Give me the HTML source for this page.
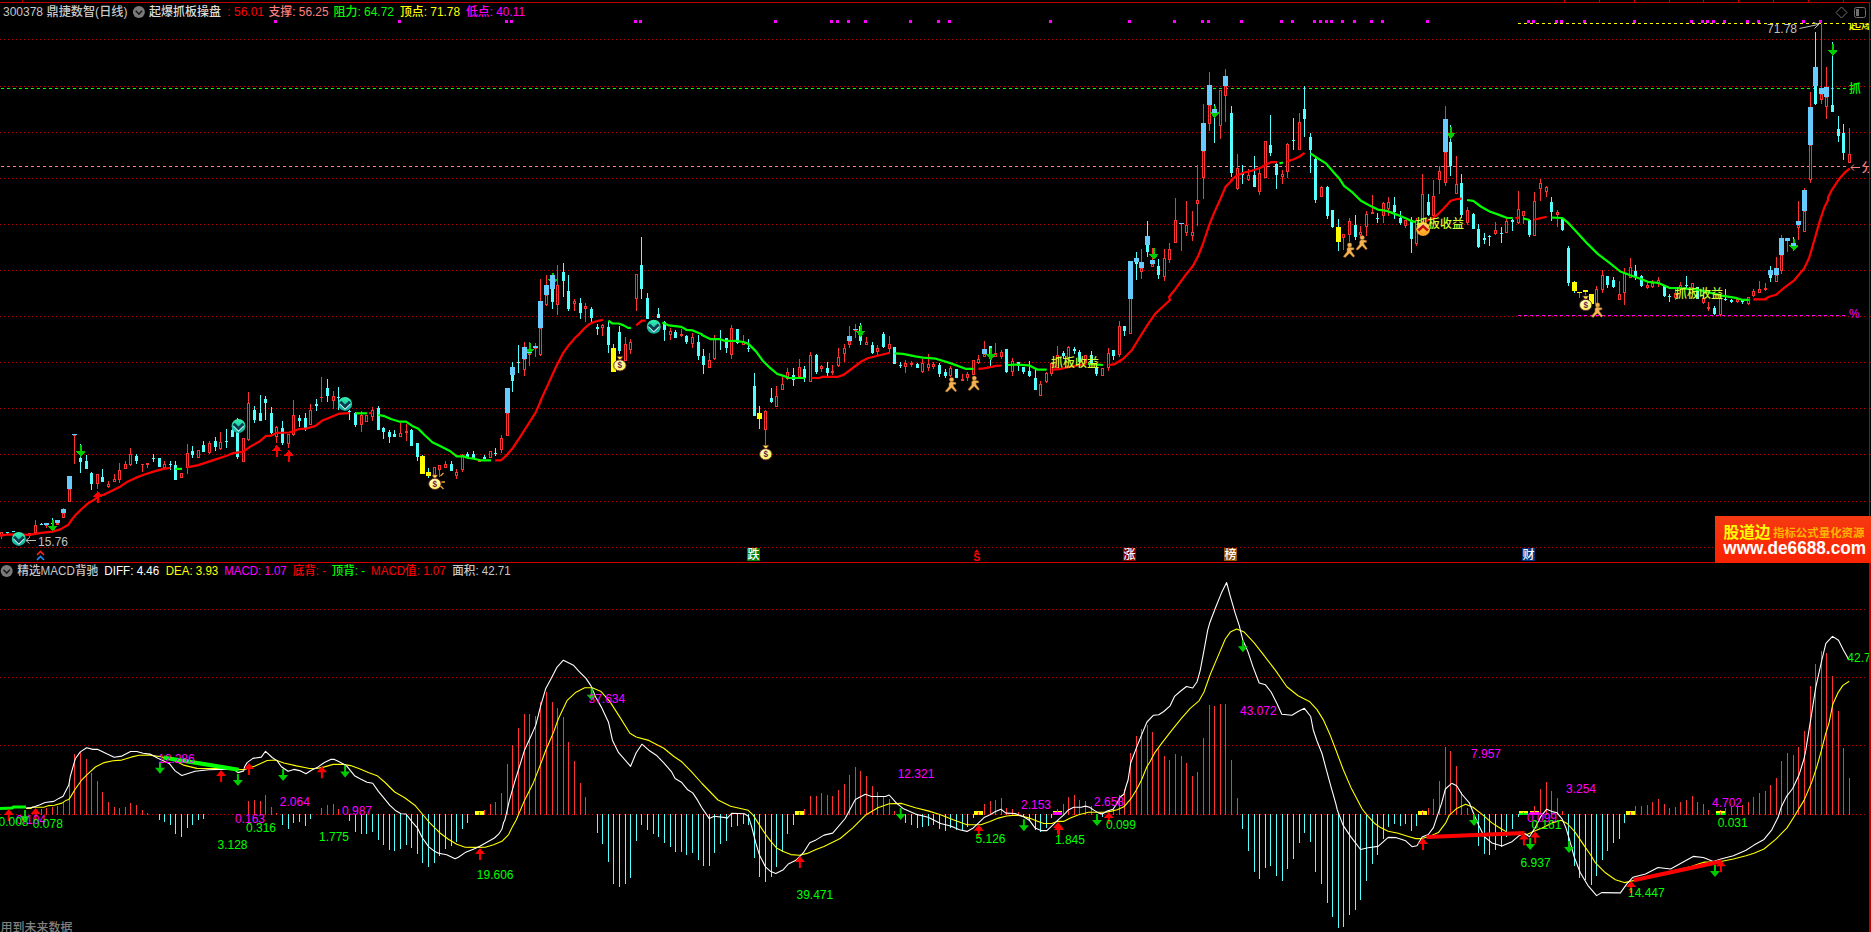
<!DOCTYPE html><html><head><meta charset="utf-8"><title>chart</title><style>html,body{margin:0;padding:0;background:#000;overflow:hidden}svg{display:block}text{font-family:"Liberation Sans","Noto Sans CJK SC",sans-serif;font-size:12px;font-weight:500}</style></head><body><svg width="1871" height="932" viewBox="0 0 1871 932"><rect width="1871" height="932" fill="#000"/><path d="M0 39.5H1865M0 86.5H1865M0 132.5H1865M0 178.5H1865M0 224.5H1865M0 270.5H1865M0 316.5H1865M0 362.5H1865M0 408.5H1865M0 454.5H1865M0 501.5H1865M0 547.5H1865M0 609.5H1865M0 677.5H1865M0 745.5H1865M0 814.5H1865" stroke="#C00000" stroke-width="1" stroke-dasharray="1 3" fill="none"/>
<path d="M0 2.5H1870M1869.5 2V562" stroke="#C00000" stroke-width="1" fill="none"/>
<rect x="1869" y="562" width="2" height="370" fill="#C00000"/>
<path d="M22.5 0V3M1564.5 0V3M1599.5 0V3M1634.5 0V3M1669.5 0V3M1703.5 0V3M1738.5 0V3M1773.5 0V3M1808.5 0V3M1843.5 0V3M1869 39.5H1871M1869 86.5H1871M1869 132.5H1871M1869 178.5H1871M1869 224.5H1871M1869 270.5H1871M1869 316.5H1871M1869 362.5H1871M1869 408.5H1871M1869 454.5H1871M1869 501.5H1871M1869 547.5H1871" stroke="#C00000" stroke-width="1" fill="none"/>
<rect x="0" y="562" width="1871" height="1" fill="#D00000"/>
<path d="M1 88.5H1848" stroke="#00FF00" stroke-dasharray="3 3" fill="none"/>
<path d="M1 166.5H1849" stroke="#FF8080" stroke-dasharray="3 3" fill="none"/>
<path d="M1518 23.5H1866" stroke="#FFFF00" stroke-dasharray="3 3" fill="none"/>
<path d="M1518 315.5H1845" stroke="#FF00FF" stroke-dasharray="3 3" fill="none"/>
<path d="M274 20h3v3h-3zM398 20h3v3h-3zM505 20h3v3h-3zM510 20h3v3h-3zM634 20h3v3h-3zM639 20h3v3h-3zM774 20h3v3h-3zM830 20h3v3h-3zM836 20h3v3h-3zM847 20h3v3h-3zM864 20h3v3h-3zM909 20h3v3h-3zM937 20h3v3h-3zM948 20h3v3h-3zM1049 20h3v3h-3zM1128 20h3v3h-3zM1173 20h3v3h-3zM1201 20h3v3h-3zM1207 20h3v3h-3zM1240 20h3v3h-3zM1280 20h3v3h-3zM1291 20h3v3h-3zM1313 20h3v3h-3zM1319 20h3v3h-3zM1325 20h3v3h-3zM1330 20h3v3h-3zM1341 20h3v3h-3zM1353 20h3v3h-3zM1370 20h3v3h-3zM1381 20h3v3h-3zM1426 20h3v3h-3zM1527 20h3v3h-3zM1532 20h3v3h-3zM1555 20h3v3h-3zM1560 20h3v3h-3zM1583 20h3v3h-3zM1633 20h3v3h-3zM1690 20h3v3h-3zM1701 20h3v3h-3zM1706 20h3v3h-3zM1712 20h3v3h-3zM1723 20h3v3h-3zM1746 20h3v3h-3zM1757 20h3v3h-3zM1802 20h3v3h-3zM1819 20h3v3h-3z" fill="#FF00FF"/>
<g shape-rendering="crispEdges">
<path d="M1 532h1V539h-1zM29 533h1V538h-1zM35 520h1V533h-1zM46 523h1V528h-1zM57 520h1V525h-1zM63 508h1V518h-1zM69 476h1V502h-1zM74 435h1V464h-1zM97 474h1V489h-1zM108 481h1V488h-1zM114 474h1V482h-1zM119 463h1V483h-1zM125 461h1V469h-1zM130 448h1V466h-1zM142 464h1V472h-1zM147 463h1V468h-1zM164 461h1V468h-1zM181 473h1V478h-1zM187 444h1V474h-1zM198 450h1V458h-1zM209 441h1V454h-1zM220 432h1V450h-1zM243 438h1V462h-1zM248 392h1V441h-1zM276 426h1V443h-1zM288 434h1V448h-1zM293 400h1V436h-1zM310 404h1V425h-1zM321 377h1V402h-1zM333 391h1V409h-1zM361 411h1V432h-1zM366 415h1V422h-1zM372 407h1V421h-1zM400 423h1V437h-1zM406 424h1V441h-1zM434 467h1V476h-1zM439 465h1V477h-1zM445 461h1V468h-1zM456 469h1V479h-1zM462 454h1V472h-1zM479 460h1V462h-1zM490 451h1V458h-1zM501 435h1V453h-1zM507 388h1V436h-1zM524 342h1V376h-1zM529 342h1V366h-1zM535 343h1V357h-1zM540 279h1V356h-1zM546 275h1V306h-1zM557 265h1V315h-1zM574 299h1V311h-1zM585 303h1V322h-1zM602 324h1V336h-1zM625 337h1V361h-1zM630 339h1V354h-1zM636 274h1V311h-1zM670 328h1V340h-1zM681 329h1V337h-1zM692 333h1V348h-1zM709 353h1V368h-1zM714 335h1V360h-1zM731 325h1V359h-1zM743 335h1V345h-1zM765 410h1V445h-1zM776 386h1V407h-1zM782 377h1V390h-1zM787 368h1V380h-1zM799 359h1V377h-1zM810 352h1V382h-1zM821 365h1V372h-1zM832 365h1V375h-1zM838 348h1V367h-1zM844 344h1V362h-1zM849 326h1V348h-1zM855 324h1V338h-1zM866 337h1V345h-1zM877 345h1V355h-1zM889 336h1V353h-1zM905 360h1V373h-1zM911 361h1V367h-1zM922 359h1V373h-1zM928 354h1V371h-1zM933 362h1V369h-1zM950 366h1V377h-1zM962 374h1V381h-1zM967 372h1V381h-1zM973 360h1V375h-1zM978 355h1V364h-1zM984 341h1V357h-1zM995 343h1V357h-1zM1001 350h1V359h-1zM1012 358h1V376h-1zM1040 381h1V396h-1zM1046 372h1V383h-1zM1051 362h1V376h-1zM1057 346h1V368h-1zM1068 346h1V360h-1zM1085 355h1V363h-1zM1102 368h1V376h-1zM1108 348h1V371h-1zM1119 321h1V357h-1zM1130 261h1V334h-1zM1141 249h1V279h-1zM1152 248h1V267h-1zM1164 249h1V281h-1zM1169 243h1V263h-1zM1175 198h1V243h-1zM1181 223h1V251h-1zM1186 201h1V236h-1zM1192 211h1V241h-1zM1197 165h1V226h-1zM1203 104h1V199h-1zM1209 72h1V131h-1zM1220 90h1V139h-1zM1225 69h1V122h-1zM1237 154h1V190h-1zM1248 169h1V181h-1zM1259 167h1V195h-1zM1265 141h1V178h-1zM1282 170h1V184h-1zM1287 143h1V178h-1zM1299 113h1V150h-1zM1321 186h1V197h-1zM1343 234h1V250h-1zM1349 218h1V242h-1zM1360 226h1V237h-1zM1366 211h1V236h-1zM1372 195h1V214h-1zM1383 202h1V223h-1zM1388 197h1V216h-1zM1405 220h1V228h-1zM1416 218h1V246h-1zM1422 174h1V224h-1zM1433 180h1V217h-1zM1439 166h1V194h-1zM1445 106h1V186h-1zM1456 156h1V194h-1zM1467 207h1V225h-1zM1495 222h1V235h-1zM1506 219h1V233h-1zM1518 191h1V224h-1zM1523 211h1V224h-1zM1534 192h1V236h-1zM1540 179h1V201h-1zM1546 186h1V197h-1zM1557 210h1V227h-1zM1579 292h1V298h-1zM1585 290h1V295h-1zM1596 286h1V304h-1zM1602 270h1V293h-1zM1619 281h1V300h-1zM1624 268h1V305h-1zM1630 258h1V278h-1zM1647 282h1V289h-1zM1652 280h1V288h-1zM1658 277h1V287h-1zM1675 289h1V300h-1zM1680 282h1V293h-1zM1692 283h1V293h-1zM1703 295h1V304h-1zM1708 302h1V311h-1zM1720 295h1V316h-1zM1737 298h1V303h-1zM1748 297h1V305h-1zM1753 289h1V297h-1zM1759 281h1V293h-1zM1765 283h1V291h-1zM1776 257h1V282h-1zM1781 235h1V274h-1zM1787 238h1V252h-1zM1798 201h1V240h-1zM1804 188h1V232h-1zM1810 92h1V183h-1zM1821 24h1V104h-1zM1826 67h1V119h-1zM1849 128h1V163h-1z" fill="#FF3232"/>
<path d="M7 532h1V534h-1zM13 531h1V532h-1zM41 523h1V525h-1zM52 518h1V524h-1zM80 444h1V473h-1zM86 455h1V469h-1zM91 472h1V490h-1zM102 469h1V482h-1zM136 454h1V464h-1zM153 454h1V462h-1zM159 458h1V467h-1zM170 461h1V470h-1zM175 461h1V480h-1zM192 446h1V458h-1zM203 441h1V452h-1zM215 437h1V451h-1zM226 429h1V448h-1zM232 429h1V437h-1zM237 418h1V459h-1zM254 406h1V423h-1zM260 395h1V421h-1zM265 396h1V420h-1zM271 407h1V434h-1zM282 421h1V445h-1zM299 415h1V427h-1zM305 413h1V431h-1zM316 399h1V411h-1zM327 379h1V402h-1zM338 387h1V410h-1zM349 410h1V420h-1zM355 412h1V427h-1zM378 406h1V430h-1zM383 427h1V439h-1zM389 430h1V443h-1zM394 430h1V437h-1zM411 429h1V446h-1zM417 443h1V461h-1zM422 455h1V474h-1zM428 468h1V478h-1zM451 461h1V471h-1zM467 452h1V457h-1zM473 451h1V458h-1zM484 455h1V459h-1zM495 448h1V456h-1zM512 362h1V392h-1zM518 345h1V373h-1zM552 275h1V309h-1zM563 263h1V297h-1zM568 275h1V311h-1zM580 298h1V319h-1zM591 307h1V323h-1zM597 324h1V335h-1zM608 322h1V353h-1zM613 344h1V372h-1zM619 326h1V354h-1zM641 237h1V299h-1zM647 293h1V319h-1zM658 308h1V318h-1zM664 321h1V341h-1zM675 330h1V338h-1zM686 335h1V344h-1zM698 335h1V360h-1zM703 349h1V374h-1zM720 330h1V350h-1zM726 338h1V353h-1zM737 329h1V344h-1zM748 339h1V352h-1zM754 373h1V416h-1zM759 406h1V429h-1zM771 388h1V403h-1zM793 368h1V386h-1zM804 366h1V382h-1zM816 354h1V374h-1zM827 362h1V376h-1zM860 323h1V345h-1zM872 342h1V354h-1zM883 332h1V348h-1zM894 347h1V364h-1zM900 362h1V368h-1zM917 363h1V368h-1zM939 363h1V377h-1zM945 369h1V378h-1zM956 369h1V378h-1zM990 346h1V367h-1zM1006 349h1V373h-1zM1018 362h1V371h-1zM1023 367h1V374h-1zM1029 361h1V377h-1zM1035 369h1V390h-1zM1063 351h1V359h-1zM1074 347h1V354h-1zM1079 350h1V363h-1zM1091 351h1V365h-1zM1096 365h1V376h-1zM1113 350h1V360h-1zM1124 326h1V336h-1zM1136 252h1V280h-1zM1147 221h1V257h-1zM1158 259h1V279h-1zM1214 104h1V143h-1zM1231 106h1V177h-1zM1242 165h1V184h-1zM1254 156h1V187h-1zM1270 115h1V156h-1zM1276 163h1V189h-1zM1293 118h1V150h-1zM1304 86h1V137h-1zM1310 133h1V173h-1zM1315 158h1V203h-1zM1327 186h1V219h-1zM1332 210h1V228h-1zM1338 219h1V251h-1zM1355 215h1V240h-1zM1377 213h1V223h-1zM1394 197h1V219h-1zM1400 211h1V225h-1zM1411 217h1V253h-1zM1428 194h1V216h-1zM1450 125h1V176h-1zM1461 174h1V218h-1zM1473 213h1V229h-1zM1478 224h1V248h-1zM1484 233h1V244h-1zM1489 235h1V246h-1zM1501 227h1V243h-1zM1512 219h1V231h-1zM1529 220h1V237h-1zM1551 197h1V221h-1zM1562 218h1V231h-1zM1568 246h1V286h-1zM1574 281h1V293h-1zM1591 294h1V304h-1zM1607 276h1V288h-1zM1613 277h1V288h-1zM1635 265h1V280h-1zM1641 275h1V287h-1zM1664 286h1V297h-1zM1669 294h1V302h-1zM1686 276h1V288h-1zM1697 287h1V299h-1zM1714 306h1V315h-1zM1725 289h1V301h-1zM1731 299h1V303h-1zM1742 299h1V304h-1zM1770 266h1V282h-1zM1793 237h1V246h-1zM1815 32h1V105h-1zM1832 42h1V112h-1zM1838 116h1V142h-1zM1843 124h1V160h-1z" fill="#54FFFF"/>
<path d="M0 532h3V536h-3zM28 533h3V536h-3zM34 525h3V533h-3zM45 525h3V526h-3zM56 523h3V525h-3zM62 513h3V518h-3zM68 489h3V502h-3zM73 435h3V436h-3zM96 474h3V484h-3zM107 484h3V487h-3zM113 479h3V482h-3zM118 470h3V480h-3zM124 464h3V469h-3zM129 454h3V465h-3zM141 464h3V465h-3zM146 463h3V465h-3zM163 464h3V468h-3zM180 473h3V478h-3zM186 453h3V468h-3zM197 450h3V458h-3zM208 443h3V453h-3zM219 442h3V449h-3zM242 438h3V462h-3zM247 403h3V440h-3zM275 427h3V437h-3zM287 434h3V444h-3zM292 415h3V435h-3zM309 410h3V425h-3zM320 397h3V398h-3zM332 396h3V401h-3zM360 415h3V425h-3zM365 415h3V422h-3zM371 410h3V417h-3zM399 433h3V437h-3zM405 431h3V433h-3zM433 467h3V475h-3zM438 465h3V470h-3zM444 464h3V468h-3zM455 472h3V476h-3zM461 455h3V470h-3zM478 460h3V462h-3zM489 451h3V458h-3zM500 438h3V450h-3zM506 413h3V436h-3zM523 359h3V370h-3zM528 353h3V355h-3zM534 348h3V349h-3zM539 328h3V355h-3zM545 295h3V305h-3zM556 285h3V305h-3zM573 301h3V304h-3zM584 306h3V309h-3zM601 325h3V328h-3zM624 344h3V361h-3zM629 342h3V350h-3zM635 274h3V299h-3zM669 331h3V335h-3zM680 334h3V336h-3zM691 337h3V344h-3zM708 360h3V368h-3zM713 339h3V359h-3zM730 328h3V355h-3zM742 342h3V345h-3zM764 411h3V430h-3zM775 396h3V407h-3zM781 384h3V390h-3zM786 372h3V379h-3zM798 367h3V377h-3zM809 355h3V382h-3zM820 366h3V369h-3zM831 371h3V373h-3zM837 357h3V366h-3zM843 348h3V354h-3zM848 341h3V345h-3zM854 329h3V331h-3zM865 342h3V345h-3zM876 348h3V352h-3zM888 344h3V349h-3zM904 363h3V367h-3zM910 363h3V365h-3zM921 363h3V372h-3zM927 364h3V368h-3zM932 364h3V367h-3zM949 368h3V376h-3zM961 379h3V381h-3zM966 374h3V378h-3zM972 360h3V375h-3zM977 359h3V363h-3zM983 354h3V357h-3zM994 353h3V357h-3zM1000 352h3V357h-3zM1011 361h3V372h-3zM1039 384h3V396h-3zM1045 373h3V382h-3zM1050 363h3V374h-3zM1056 355h3V368h-3zM1067 347h3V360h-3zM1084 355h3V363h-3zM1101 368h3V376h-3zM1107 353h3V368h-3zM1118 326h3V355h-3zM1129 261h3V334h-3zM1140 268h3V272h-3zM1151 264h3V267h-3zM1163 258h3V277h-3zM1168 249h3V260h-3zM1174 220h3V243h-3zM1180 223h3V224h-3zM1185 225h3V233h-3zM1191 232h3V236h-3zM1196 200h3V204h-3zM1202 151h3V178h-3zM1208 105h3V124h-3zM1219 90h3V126h-3zM1224 86h3V96h-3zM1236 168h3V189h-3zM1247 175h3V180h-3zM1258 173h3V192h-3zM1264 141h3V178h-3zM1281 174h3V177h-3zM1286 144h3V172h-3zM1298 122h3V150h-3zM1320 187h3V197h-3zM1342 234h3V238h-3zM1348 221h3V235h-3zM1359 232h3V235h-3zM1365 214h3V227h-3zM1371 212h3V214h-3zM1382 203h3V216h-3zM1387 202h3V209h-3zM1404 220h3V226h-3zM1415 220h3V244h-3zM1421 194h3V222h-3zM1432 196h3V216h-3zM1438 171h3V180h-3zM1444 152h3V183h-3zM1455 184h3V194h-3zM1466 210h3V223h-3zM1494 230h3V234h-3zM1505 221h3V233h-3zM1517 209h3V223h-3zM1522 211h3V216h-3zM1533 201h3V236h-3zM1539 183h3V189h-3zM1545 187h3V192h-3zM1556 212h3V215h-3zM1595 289h3V304h-3zM1601 275h3V290h-3zM1618 294h3V300h-3zM1623 273h3V293h-3zM1629 267h3V278h-3zM1646 285h3V288h-3zM1651 283h3V287h-3zM1657 280h3V283h-3zM1674 293h3V298h-3zM1679 285h3V288h-3zM1691 283h3V288h-3zM1702 298h3V303h-3zM1707 307h3V309h-3zM1719 296h3V315h-3zM1736 299h3V302h-3zM1747 297h3V304h-3zM1752 291h3V296h-3zM1758 289h3V293h-3zM1764 288h3V290h-3zM1775 275h3V282h-3zM1780 255h3V271h-3zM1786 240h3V241h-3zM1797 225h3V228h-3zM1803 211h3V232h-3zM1809 145h3V180h-3zM1820 94h3V100h-3zM1825 97h3V107h-3zM1848 154h3V163h-3z" fill="#FF3232"/>
<path d="M1 533h1V535h-1zM29 534h1V535h-1zM35 526h1V532h-1zM63 514h1V517h-1zM69 490h1V501h-1zM97 475h1V483h-1zM108 485h1V486h-1zM114 480h1V481h-1zM119 471h1V479h-1zM125 465h1V468h-1zM130 455h1V464h-1zM164 465h1V467h-1zM181 474h1V477h-1zM187 454h1V467h-1zM198 451h1V457h-1zM209 444h1V452h-1zM220 443h1V448h-1zM243 439h1V461h-1zM248 404h1V439h-1zM276 428h1V436h-1zM288 435h1V443h-1zM293 416h1V434h-1zM310 411h1V424h-1zM333 397h1V400h-1zM361 416h1V424h-1zM366 416h1V421h-1zM372 411h1V416h-1zM400 434h1V436h-1zM434 468h1V474h-1zM439 466h1V469h-1zM445 465h1V467h-1zM456 473h1V475h-1zM462 456h1V469h-1zM490 452h1V457h-1zM501 439h1V449h-1zM507 414h1V435h-1zM524 360h1V369h-1zM540 329h1V354h-1zM546 296h1V304h-1zM557 286h1V304h-1zM574 302h1V303h-1zM585 307h1V308h-1zM602 326h1V327h-1zM625 345h1V360h-1zM630 343h1V349h-1zM636 275h1V298h-1zM670 332h1V334h-1zM692 338h1V343h-1zM709 361h1V367h-1zM714 340h1V358h-1zM731 329h1V354h-1zM743 343h1V344h-1zM765 412h1V429h-1zM776 397h1V406h-1zM782 385h1V389h-1zM787 373h1V378h-1zM799 368h1V376h-1zM810 356h1V381h-1zM821 367h1V368h-1zM838 358h1V365h-1zM844 349h1V353h-1zM849 342h1V344h-1zM866 343h1V344h-1zM877 349h1V351h-1zM889 345h1V348h-1zM905 364h1V366h-1zM922 364h1V371h-1zM928 365h1V367h-1zM933 365h1V366h-1zM950 369h1V375h-1zM967 375h1V377h-1zM973 361h1V374h-1zM978 360h1V362h-1zM984 355h1V356h-1zM995 354h1V356h-1zM1001 353h1V356h-1zM1012 362h1V371h-1zM1040 385h1V395h-1zM1046 374h1V381h-1zM1051 364h1V373h-1zM1057 356h1V367h-1zM1068 348h1V359h-1zM1085 356h1V362h-1zM1102 369h1V375h-1zM1108 354h1V367h-1zM1119 327h1V354h-1zM1130 262h1V333h-1zM1141 269h1V271h-1zM1152 265h1V266h-1zM1164 259h1V276h-1zM1169 250h1V259h-1zM1175 221h1V242h-1zM1186 226h1V232h-1zM1192 233h1V235h-1zM1197 201h1V203h-1zM1203 152h1V177h-1zM1209 106h1V123h-1zM1220 91h1V125h-1zM1225 87h1V95h-1zM1237 169h1V188h-1zM1248 176h1V179h-1zM1259 174h1V191h-1zM1265 142h1V177h-1zM1282 175h1V176h-1zM1287 145h1V171h-1zM1299 123h1V149h-1zM1321 188h1V196h-1zM1343 235h1V237h-1zM1349 222h1V234h-1zM1360 233h1V234h-1zM1366 215h1V226h-1zM1383 204h1V215h-1zM1388 203h1V208h-1zM1405 221h1V225h-1zM1416 221h1V243h-1zM1422 195h1V221h-1zM1433 197h1V215h-1zM1439 172h1V179h-1zM1445 153h1V182h-1zM1456 185h1V193h-1zM1467 211h1V222h-1zM1495 231h1V233h-1zM1506 222h1V232h-1zM1518 210h1V222h-1zM1523 212h1V215h-1zM1534 202h1V235h-1zM1540 184h1V188h-1zM1546 188h1V191h-1zM1557 213h1V214h-1zM1596 290h1V303h-1zM1602 276h1V289h-1zM1619 295h1V299h-1zM1624 274h1V292h-1zM1630 268h1V277h-1zM1647 286h1V287h-1zM1652 284h1V286h-1zM1658 281h1V282h-1zM1675 294h1V297h-1zM1680 286h1V287h-1zM1692 284h1V287h-1zM1703 299h1V302h-1zM1720 297h1V314h-1zM1737 300h1V301h-1zM1748 298h1V303h-1zM1753 292h1V295h-1zM1759 290h1V292h-1zM1776 276h1V281h-1zM1781 256h1V270h-1zM1798 226h1V227h-1zM1804 212h1V231h-1zM1810 146h1V179h-1zM1821 95h1V99h-1zM1826 98h1V106h-1zM1849 155h1V162h-1z" fill="#000"/>
<path d="M6 532h3V533h-3zM12 531h3V532h-3zM40 524h3V525h-3zM51 523h3V524h-3zM79 458h3V462h-3zM85 461h3V469h-3zM90 473h3V484h-3zM101 477h3V482h-3zM135 456h3V461h-3zM152 458h3V459h-3zM158 458h3V467h-3zM169 464h3V465h-3zM174 465h3V480h-3zM191 451h3V455h-3zM202 445h3V452h-3zM214 441h3V447h-3zM225 441h3V442h-3zM231 430h3V437h-3zM236 420h3V457h-3zM253 410h3V420h-3zM259 413h3V421h-3zM264 399h3V403h-3zM270 413h3V433h-3zM281 428h3V443h-3zM298 418h3V421h-3zM304 418h3V428h-3zM315 404h3V406h-3zM326 388h3V396h-3zM337 397h3V398h-3zM348 411h3V412h-3zM354 413h3V425h-3zM377 408h3V430h-3zM382 428h3V432h-3zM388 432h3V437h-3zM393 434h3V437h-3zM410 430h3V446h-3zM416 443h3V457h-3zM450 464h3V471h-3zM466 454h3V457h-3zM472 454h3V458h-3zM483 457h3V459h-3zM494 453h3V454h-3zM511 375h3V381h-3zM517 362h3V363h-3zM551 289h3V302h-3zM562 272h3V281h-3zM567 291h3V309h-3zM579 303h3V313h-3zM590 309h3V318h-3zM596 327h3V329h-3zM607 327h3V345h-3zM618 332h3V351h-3zM640 265h3V289h-3zM646 298h3V319h-3zM657 314h3V318h-3zM663 322h3V330h-3zM674 332h3V338h-3zM685 336h3V342h-3zM697 342h3V356h-3zM702 356h3V365h-3zM719 339h3V340h-3zM725 338h3V348h-3zM736 329h3V343h-3zM747 348h3V349h-3zM753 386h3V416h-3zM770 398h3V402h-3zM792 375h3V380h-3zM803 369h3V378h-3zM815 355h3V372h-3zM826 368h3V373h-3zM859 326h3V341h-3zM871 345h3V353h-3zM882 334h3V347h-3zM893 347h3V364h-3zM899 365h3V366h-3zM916 364h3V368h-3zM938 365h3V374h-3zM944 372h3V376h-3zM955 369h3V378h-3zM989 346h3V355h-3zM1005 349h3V372h-3zM1017 362h3V366h-3zM1022 367h3V372h-3zM1028 371h3V376h-3zM1034 378h3V390h-3zM1062 353h3V356h-3zM1073 349h3V351h-3zM1078 352h3V362h-3zM1090 355h3V363h-3zM1095 367h3V374h-3zM1112 350h3V356h-3zM1123 326h3V331h-3zM1135 262h3V264h-3zM1146 245h3V252h-3zM1157 266h3V275h-3zM1213 113h3V114h-3zM1230 113h3V173h-3zM1241 173h3V175h-3zM1253 175h3V187h-3zM1269 145h3V153h-3zM1275 164h3V175h-3zM1292 140h3V141h-3zM1303 109h3V119h-3zM1309 137h3V150h-3zM1314 159h3V200h-3zM1326 187h3V216h-3zM1331 210h3V227h-3zM1354 225h3V237h-3zM1376 218h3V219h-3zM1393 205h3V212h-3zM1399 218h3V223h-3zM1410 220h3V239h-3zM1427 202h3V215h-3zM1449 142h3V166h-3zM1460 183h3V215h-3zM1472 214h3V229h-3zM1477 229h3V247h-3zM1483 238h3V240h-3zM1488 236h3V237h-3zM1500 233h3V234h-3zM1511 220h3V222h-3zM1528 220h3V235h-3zM1550 202h3V212h-3zM1561 219h3V230h-3zM1567 248h3V283h-3zM1606 276h3V285h-3zM1612 280h3V287h-3zM1634 271h3V277h-3zM1640 276h3V286h-3zM1663 286h3V296h-3zM1668 296h3V297h-3zM1685 285h3V286h-3zM1696 287h3V299h-3zM1713 308h3V314h-3zM1724 299h3V300h-3zM1730 300h3V302h-3zM1741 300h3V302h-3zM1769 275h3V278h-3zM1792 245h3V246h-3zM1814 86h3V104h-3zM1831 105h3V112h-3zM1837 129h3V136h-3zM1842 133h3V153h-3z" fill="#54FFFF"/>
<path d="M79.8 445h2v6h4l-5 6l-5 -6h4z" fill="#00CC00"/>
<path d="M51.7 519.7h2v6h4l-5 6l-5 -6h4z" fill="#00CC00"/>
<path d="M528.5 343h2v6h4l-5 6l-5 -6h4z" fill="#00CC00"/>
<path d="M551.9 273h2v6h4l-5 6l-5 -6h4z" fill="#00CC00"/>
<path d="M859.5 325h2v6h4l-5 6l-5 -6h4z" fill="#00CC00"/>
<path d="M989.9 348.3h2v6h4l-5 6l-5 -6h4z" fill="#00CC00"/>
<path d="M1152.9 247.8h2v6h4l-5 6l-5 -6h4z" fill="#00CC00"/>
<path d="M1213.8 106.3h2v6h4l-5 6l-5 -6h4z" fill="#00CC00"/>
<path d="M1449.7 127h2v6h4l-5 6l-5 -6h4z" fill="#00CC00"/>
<path d="M1792.9 239h2v6h4l-5 6l-5 -6h4z" fill="#00CC00"/>
<path d="M1831.9 44h2v6h4l-5 6l-5 -6h4z" fill="#00CC00"/>
<path d="M276.7 445l5 6h-4v6h-2v-6h-4z" fill="#FF0000"/>
<path d="M288.9 450l5 6h-4v6h-2v-6h-4z" fill="#FF0000"/>
<path d="M97.9 491l5 6h-4v6h-2v-6h-4z" fill="#FF0000"/>
<path d="M44 523h5V525h-5zM55 520h5V523h-5zM61 509h5V513h-5zM67 476h5V489h-5zM72 434h5V435h-5zM505 388h5V413h-5zM510 367h5V375h-5zM522 347h5V359h-5zM527 352h5V353h-5zM533 346h5V348h-5zM538 301h5V328h-5zM544 285h5V295h-5zM550 275h5V289h-5zM847 336h5V341h-5zM853 329h5V330h-5zM982 349h5V354h-5zM1128 261h5V299h-5zM1134 258h5V262h-5zM1139 262h5V268h-5zM1145 236h5V245h-5zM1150 260h5V264h-5zM1179 223h5V224h-5zM1201 123h5V151h-5zM1207 85h5V105h-5zM1212 109h5V113h-5zM1223 76h5V86h-5zM1443 119h5V152h-5zM1768 270h5V275h-5zM1774 268h5V275h-5zM1779 238h5V255h-5zM1785 238h5V241h-5zM1791 243h5V246h-5zM1796 221h5V225h-5zM1802 190h5V211h-5zM1808 107h5V145h-5zM1813 67h5V86h-5zM1819 88h5V94h-5zM1824 87h5V97h-5z" fill="#66CCFF"/>
<path d="M420 456h5V474h-5zM426 472h5V476h-5zM611 348h5V372h-5zM757 413h5V419h-5zM1336 227h5V242h-5zM1572 282h5V291h-5zM1577 292h5V293h-5zM1583 290h5V292h-5zM1589 294h5V304h-5z" fill="#FFFF00"/>
</g>
<path d="M0.0 535.6L8.8 534.4L28.9 534.8L41.4 532.9L52.7 531.6L60.3 529.4L68.4 524.7L72.2 519.1L75.3 515.3L81.6 509.0L87.9 503.4L93.5 500.2L99.2 495.8L104.2 494.6L113.0 490.2L120.5 486.4L128.0 481.4L135.6 477.9L144.4 474.5L154.4 471.4L163.2 468.9L170.5 467.8" stroke="#FF0000" stroke-width="2.2" fill="none" stroke-linejoin="round"/>
<path d="M175.1 468.9L182.0 468.9" stroke="#00FF00" stroke-width="2.2" fill="none" stroke-linejoin="round"/>
<path d="M187.0 467.3L198.3 465.1L213.4 460.1L226.0 456.0L234.0 452.8L234.0 453.1L243.4 451.6L250.3 446.6L259.1 441.8L266.0 435.9L270.4 435.9L275.4 433.4L277.3 432.8L289.2 432.5L294.3 430.9L299.3 429.0L305.6 428.7L315.6 425.9L321.9 420.8L329.4 417.7L338.2 413.9L344.5 413.3L349.5 413.1" stroke="#FF0000" stroke-width="2.2" fill="none" stroke-linejoin="round"/>
<path d="M355.1 413.3L367.1 413.3" stroke="#00FF00" stroke-width="2.2" fill="none" stroke-linejoin="round"/>
<path d="M368.9 413.3L372.1 412.7" stroke="#FF0000" stroke-width="2.2" fill="none" stroke-linejoin="round"/>
<path d="M378.4 414.9L384.6 416.2L390.9 419.0L399.7 421.7L406.0 421.7L412.3 425.9L417.9 428.4L424.8 435.3L432.3 442.2L441.1 446.6L449.9 451.0L456.8 456.4L463.7 456.4L468.0 457.9L467.9 458.0L474.1 458.7L480.3 460.3L491.0 460.3" stroke="#00FF00" stroke-width="2.2" fill="none" stroke-linejoin="round"/>
<path d="M495.2 460.3L501.1 460.3L506.7 455.2L513.0 447.7L520.5 436.4L528.0 424.5L535.6 412.6L541.2 400.0L540.2 401.5L548.3 383.9L555.9 367.0L563.4 352.6L568.4 345.6L573.4 340.0L574.7 338.0L578.5 334.8L583.5 329.2L588.5 324.8L591.7 322.9L597.3 321.0L602.9 319.8" stroke="#FF0000" stroke-width="2.2" fill="none" stroke-linejoin="round"/>
<path d="M608.3 320.6L612.4 323.5L618.6 323.5L623.7 325.4L628.1 327.9L630.9 327.9" stroke="#00FF00" stroke-width="2.2" fill="none" stroke-linejoin="round"/>
<path d="M636.2 325.4L641.9 320.6L645.6 320.6" stroke="#FF0000" stroke-width="2.2" fill="none" stroke-linejoin="round"/>
<path d="M662.3 322.6L668.9 325.4L681.4 326.9L686.4 329.8L692.7 330.4L702.0 334.2L702.0 335.1L710.2 339.1L719.6 339.1L724.6 340.8L735.9 340.8L743.4 342.0L748.4 343.9L756.0 351.4L762.3 360.2L769.8 367.7L777.3 374.0L783.6 375.9L788.6 377.8L804.9 378.0" stroke="#00FF00" stroke-width="2.2" fill="none" stroke-linejoin="round"/>
<path d="M811.2 378.0L820.0 377.8L822.5 376.8L838.2 376.8L843.9 374.6L851.4 369.0L861.4 361.5L867.7 358.3L877.7 355.8L889.7 352.7" stroke="#FF0000" stroke-width="2.2" fill="none" stroke-linejoin="round"/>
<path d="M894.7 353.3L902.9 353.9L915.4 356.4L922.9 357.7L936.0 358.7L936.0 358.7L951.1 363.4L965.5 368.8L973.7 368.8" stroke="#00FF00" stroke-width="2.2" fill="none" stroke-linejoin="round"/>
<path d="M978.4 368.8L983.7 368.4L990.0 367.2L996.3 365.9L1001.9 365.5" stroke="#FF0000" stroke-width="2.2" fill="none" stroke-linejoin="round"/>
<path d="M1007.6 365.0L1016.3 364.6L1028.9 365.3L1037.7 369.7L1046.7 369.7" stroke="#00FF00" stroke-width="2.2" fill="none" stroke-linejoin="round"/>
<path d="M1052.7 369.7L1061.5 368.8L1067.8 367.2L1077.9 365.3L1086.6 363.8" stroke="#FF0000" stroke-width="2.2" fill="none" stroke-linejoin="round"/>
<path d="M1087.9 363.8L1103.0 365.0" stroke="#00FF00" stroke-width="2.2" fill="none" stroke-linejoin="round"/>
<path d="M1108.6 365.0L1114.3 364.3L1123.0 359.0L1131.8 350.2L1139.4 337.7L1148.2 323.9L1155.7 313.2L1170.0 300.0L1169.0 297.0L1175.3 289.2L1185.3 275.4L1192.9 266.0L1197.9 256.6L1202.9 244.0L1209.2 225.2L1214.2 212.6L1220.5 198.8L1225.5 186.9L1232.4 180.0L1231.1 180.0L1235.5 176.6L1243.1 172.8L1251.9 170.7L1260.6 167.8L1265.7 164.7L1270.7 162.2L1277.0 162.2" stroke="#FF0000" stroke-width="2.2" fill="none" stroke-linejoin="round"/>
<path d="M1279.5 163.4L1283.0 162.5" stroke="#00FF00" stroke-width="2.2" fill="none" stroke-linejoin="round"/>
<path d="M1287.0 161.5L1294.5 159.0L1299.6 156.5L1304.6 152.8" stroke="#FF0000" stroke-width="2.2" fill="none" stroke-linejoin="round"/>
<path d="M1310.5 153.4L1317.1 157.8L1325.9 163.4L1334.7 173.5L1339.7 179.1L1344.0 185.8L1352.8 192.7L1360.9 200.8L1369.1 205.2L1377.9 209.6L1386.7 210.9L1396.7 214.6L1406.8 218.8L1411.8 221.3L1416.2 221.8" stroke="#00FF00" stroke-width="2.2" fill="none" stroke-linejoin="round"/>
<path d="M1425.6 221.3L1431.9 218.4L1436.9 215.3L1443.2 209.0L1450.7 200.8L1457.0 199.0L1461.8 198.7" stroke="#FF0000" stroke-width="2.2" fill="none" stroke-linejoin="round"/>
<path d="M1467.0 200.0L1473.3 200.8L1480.8 206.5L1489.6 211.5L1498.4 214.6L1507.2 218.0L1512.8 218.0" stroke="#00FF00" stroke-width="2.2" fill="none" stroke-linejoin="round"/>
<path d="M1515.4 218.4L1519.1 217.5" stroke="#FF0000" stroke-width="2.2" fill="none" stroke-linejoin="round"/>
<path d="M1522.9 218.4L1529.8 220.0" stroke="#00FF00" stroke-width="2.2" fill="none" stroke-linejoin="round"/>
<path d="M1534.2 219.7L1539.8 218.4L1546.7 216.8" stroke="#FF0000" stroke-width="2.2" fill="none" stroke-linejoin="round"/>
<path d="M1551.1 217.5L1562.4 218.0L1568.7 223.4L1578.0 233.5L1587.6 243.9L1597.7 253.9L1610.2 263.4L1620.3 271.5L1630.3 275.3L1640.3 278.8L1647.9 281.8L1657.9 282.8L1669.2 287.8L1678.0 288.1L1698.1 289.7L1721.9 295.6L1735.7 297.9L1742.0 299.8L1748.9 299.8" stroke="#00FF00" stroke-width="2.2" fill="none" stroke-linejoin="round"/>
<path d="M1753.3 299.4L1765.9 299.4L1764.7 299.2L1769.1 296.7L1776.0 294.8L1784.1 287.9L1794.2 280.3L1804.2 268.4L1809.2 257.7L1814.3 240.2L1819.3 222.6L1824.3 207.5L1828.1 200.0L1827.9 197.8L1831.6 190.3L1839.1 179.0L1845.4 172.1L1849.8 168.3" stroke="#FF0000" stroke-width="2.2" fill="none" stroke-linejoin="round"/>
<defs><linearGradient id="tg" x1="0" y1="0" x2="0" y2="1"><stop offset="0" stop-color="#34F2B0"/><stop offset="1" stop-color="#10A8A0"/></linearGradient><linearGradient id="og" x1="0" y1="0" x2="0" y2="1"><stop offset="0" stop-color="#FFE040"/><stop offset="1" stop-color="#FF9A20"/></linearGradient><radialGradient id="bg" cx="0.4" cy="0.35" r="0.8"><stop offset="0" stop-color="#FFFFD8"/><stop offset="1" stop-color="#FFF030"/></radialGradient><linearGradient id="lg" x1="0" y1="0" x2="0" y2="1"><stop offset="0" stop-color="#F53A12"/><stop offset="1" stop-color="#FA2200"/></linearGradient><clipPath id="cpq"><rect x="1840" y="23" width="29" height="10"/></clipPath><clipPath id="cpr"><rect x="0" y="0" width="1869" height="932"/></clipPath></defs>
<g transform="translate(18.8 538.9)"><circle r="7" fill="url(#tg)"/><path d="M-4.8 -0.2L0 4.6L4.8 -0.2" stroke="#EAF6F2" stroke-width="1.6" fill="none"/><path d="M-4.8 -2.2L0 2.6L4.8 -2.2" stroke="#083C50" stroke-width="2.8" fill="none"/></g>
<g transform="translate(238.5 426)"><circle r="7" fill="url(#tg)"/><path d="M-4.8 -0.2L0 4.6L4.8 -0.2" stroke="#EAF6F2" stroke-width="1.6" fill="none"/><path d="M-4.8 -2.2L0 2.6L4.8 -2.2" stroke="#083C50" stroke-width="2.8" fill="none"/></g>
<g transform="translate(345.1 403.9)"><circle r="7" fill="url(#tg)"/><path d="M-4.8 -0.2L0 4.6L4.8 -0.2" stroke="#EAF6F2" stroke-width="1.6" fill="none"/><path d="M-4.8 -2.2L0 2.6L4.8 -2.2" stroke="#083C50" stroke-width="2.8" fill="none"/></g>
<g transform="translate(653.8 326.7)"><circle r="7" fill="url(#tg)"/><path d="M-4.8 -0.2L0 4.6L4.8 -0.2" stroke="#EAF6F2" stroke-width="1.6" fill="none"/><path d="M-4.8 -2.2L0 2.6L4.8 -2.2" stroke="#083C50" stroke-width="2.8" fill="none"/></g>
<g transform="translate(434.9 482.4)"><path d="M-3 -7.5h6l-2 3h-2z" fill="#FFF040" stroke="#602030" stroke-width="0.7"/><ellipse cx="0" cy="1.5" rx="6.2" ry="5.6" fill="url(#bg)" stroke="#602030" stroke-width="0.9"/><text x="0" y="4.4" style="font-size:8.2px;font-weight:bold" fill="#702030" text-anchor="middle">$</text></g>
<g transform="translate(619.9 363.9)"><path d="M-3 -7.5h6l-2 3h-2z" fill="#FFF040" stroke="#602030" stroke-width="0.7"/><ellipse cx="0" cy="1.5" rx="6.2" ry="5.6" fill="url(#bg)" stroke="#602030" stroke-width="0.9"/><text x="0" y="4.4" style="font-size:8.2px;font-weight:bold" fill="#702030" text-anchor="middle">$</text></g>
<g transform="translate(765.8 452.8)"><path d="M-3 -7.5h6l-2 3h-2z" fill="#FFF040" stroke="#602030" stroke-width="0.7"/><ellipse cx="0" cy="1.5" rx="6.2" ry="5.6" fill="url(#bg)" stroke="#602030" stroke-width="0.9"/><text x="0" y="4.4" style="font-size:8.2px;font-weight:bold" fill="#702030" text-anchor="middle">$</text></g>
<g transform="translate(1585.7 303.5)"><path d="M-3 -7.5h6l-2 3h-2z" fill="#FFF040" stroke="#602030" stroke-width="0.7"/><ellipse cx="0" cy="1.5" rx="6.2" ry="5.6" fill="url(#bg)" stroke="#602030" stroke-width="0.9"/><text x="0" y="4.4" style="font-size:8.2px;font-weight:bold" fill="#702030" text-anchor="middle">$</text></g>
<path d="M440.5 476l3 -3M441.5 482l3.5 0M440.5 486l3 3" stroke="#E9A23B" stroke-width="1.3" fill="none"/>
<g transform="translate(951 385)" fill="#F4B455" stroke="#A8681C" stroke-width="0.5"><circle cx="0.6" cy="-5.4" r="2.2"/><path d="M-0.6 -3.3L2 -3L4.9 -2.5L4.9 -0.7L2.2 -0.5L2.5 1.2L5.7 5.7L4.4 6.8L0.5 2.8L-3.8 7L-5.7 6.2L-2 1.4L-2 -1.6z"/></g>
<g transform="translate(973.7 383.5)" fill="#F4B455" stroke="#A8681C" stroke-width="0.5"><circle cx="0.6" cy="-5.4" r="2.2"/><path d="M-0.6 -3.3L2 -3L4.9 -2.5L4.9 -0.7L2.2 -0.5L2.5 1.2L5.7 5.7L4.4 6.8L0.5 2.8L-3.8 7L-5.7 6.2L-2 1.4L-2 -1.6z"/></g>
<g transform="translate(1349 250.4)" fill="#F4B455" stroke="#A8681C" stroke-width="0.5"><circle cx="0.6" cy="-5.4" r="2.2"/><path d="M-0.6 -3.3L2 -3L4.9 -2.5L4.9 -0.7L2.2 -0.5L2.5 1.2L5.7 5.7L4.4 6.8L0.5 2.8L-3.8 7L-5.7 6.2L-2 1.4L-2 -1.6z"/></g>
<g transform="translate(1361.6 243)" fill="#F4B455" stroke="#A8681C" stroke-width="0.5"><circle cx="0.6" cy="-5.4" r="2.2"/><path d="M-0.6 -3.3L2 -3L4.9 -2.5L4.9 -0.7L2.2 -0.5L2.5 1.2L5.7 5.7L4.4 6.8L0.5 2.8L-3.8 7L-5.7 6.2L-2 1.4L-2 -1.6z"/></g>
<g transform="translate(1597 310.4)" fill="#F4B455" stroke="#A8681C" stroke-width="0.5"><circle cx="0.6" cy="-5.4" r="2.2"/><path d="M-0.6 -3.3L2 -3L4.9 -2.5L4.9 -0.7L2.2 -0.5L2.5 1.2L5.7 5.7L4.4 6.8L0.5 2.8L-3.8 7L-5.7 6.2L-2 1.4L-2 -1.6z"/></g>
<path d="M37 555l3.5 -3.5l3.5 3.5" stroke="#FF2020" stroke-width="1.6" fill="none"/><path d="M37 560l3.5 -3.5l3.5 3.5" stroke="#1E8FFF" stroke-width="1.6" fill="none"/>
<text x="1051" y="366.5" fill="#CCFF33" >抓板收益</text>
<text x="1416" y="227.5" fill="#CCFF33" >抓板收益</text>
<text x="1675" y="297.5" fill="#CCFF33" >抓板收益</text>
<text x="1849" y="92.5" fill="#00FF00" >抓</text>
<text x="1849" y="28.5" fill="#FFFF00" clip-path="url(#cpq)">起爆</text>
<text x="1861.5" y="172" fill="#FF8080" clip-path="url(#cpr)">分</text>
<path d="M1851 167.5H1860M1854 164.5L1851 167.5L1854 170.5" stroke="#FF8080" fill="none"/>
<text x="1849" y="318" fill="#FF00FF" >%</text>
<text x="1767" y="33" fill="#C0C0C0" >71.78</text>
<path d="M1799.5 28.5L1818 24.5M1813 22.5L1819 24.3L1814.5 28.5" stroke="#C0C0C0" fill="none"/>
<text x="38" y="546" fill="#C0C0C0" >15.76</text>
<path d="M26 540.5H36M29.5 537.5L26 540.5L29.5 543.5" stroke="#C0C0C0" fill="none"/>
<g transform="translate(1423.1 229.2)"><circle r="6.9" fill="url(#og)"/><path d="M-4.8 -0.5L0 -4.8L4.8 -0.5" stroke="#FFF4E0" stroke-width="1.4" fill="none"/><path d="M-4.8 1.2L0 -3.2L4.8 1.2" stroke="#C01008" stroke-width="2.7" fill="none"/></g>
<path d="M1841.5 7L1847 12.5L1841.5 18L1836 12.5z" stroke="#707070" fill="none"/>
<rect x="1854.5" y="7.5" width="11" height="10" rx="2" stroke="#707070" fill="none"/><rect x="1856" y="9" width="3" height="7" fill="#707070"/>
<rect x="747" y="548" width="13" height="13" fill="#008000"/><text x="747.5" y="558.8" fill="#FFFFFF" >跌</text>
<rect x="1123" y="548" width="13" height="13" fill="#800000"/><text x="1123.5" y="558.8" fill="#FFFFFF" >涨</text>
<rect x="1224" y="548" width="13" height="13" fill="#965005"/><text x="1224.5" y="558.8" fill="#FFFFFF" >榜</text>
<rect x="1522" y="548" width="13" height="13" fill="#003580"/><text x="1522.5" y="558.8" fill="#FFFFFF" >财</text>
<path d="M974 552.5h5.5l-2.75 -3z" fill="#FF0000"/><text x="973.3" y="560.6" fill="#FF0000" style="font-weight:bold;font-size:10.5px">S</text>
<g shape-rendering="crispEdges">
<path d="M41 809h1V815h-1zM46 808h1V815h-1zM52 807h1V815h-1zM57 806h1V815h-1zM63 802h1V815h-1zM69 783h1V815h-1zM74 754h1V815h-1zM80 752h1V815h-1zM86 759h1V815h-1zM91 773h1V815h-1zM97 781h1V815h-1zM102 792h1V815h-1zM108 802h1V815h-1zM114 807h1V815h-1zM119 808h1V815h-1zM125 807h1V815h-1zM130 803h1V815h-1zM136 805h1V815h-1zM142 810h1V815h-1zM147 813h1V815h-1zM248 801h1V815h-1zM254 800h1V815h-1zM260 801h1V815h-1zM265 795h1V815h-1zM271 807h1V815h-1zM276 813h1V815h-1zM321 808h1V815h-1zM327 805h1V815h-1zM333 804h1V815h-1zM338 809h1V815h-1zM484 810h1V815h-1zM490 804h1V815h-1zM495 802h1V815h-1zM501 793h1V815h-1zM507 764h1V815h-1zM512 745h1V815h-1zM518 728h1V815h-1zM524 714h1V815h-1zM529 714h1V815h-1zM535 716h1V815h-1zM540 702h1V815h-1zM546 692h1V815h-1zM552 702h1V815h-1zM557 708h1V815h-1zM563 717h1V815h-1zM568 742h1V815h-1zM574 761h1V815h-1zM580 783h1V815h-1zM585 797h1V815h-1zM804 809h1V815h-1zM810 796h1V815h-1zM816 796h1V815h-1zM821 793h1V815h-1zM827 795h1V815h-1zM832 796h1V815h-1zM838 790h1V815h-1zM844 784h1V815h-1zM849 775h1V815h-1zM855 767h1V815h-1zM860 771h1V815h-1zM866 776h1V815h-1zM872 786h1V815h-1zM877 792h1V815h-1zM883 797h1V815h-1zM889 799h1V815h-1zM894 811h1V815h-1zM984 804h1V815h-1zM990 801h1V815h-1zM995 800h1V815h-1zM1001 798h1V815h-1zM1006 808h1V815h-1zM1012 809h1V815h-1zM1018 812h1V815h-1zM1057 809h1V815h-1zM1063 804h1V815h-1zM1068 797h1V815h-1zM1074 795h1V815h-1zM1079 800h1V815h-1zM1085 801h1V815h-1zM1091 806h1V815h-1zM1113 809h1V815h-1zM1119 795h1V815h-1zM1124 789h1V815h-1zM1130 753h1V815h-1zM1136 736h1V815h-1zM1141 729h1V815h-1zM1147 725h1V815h-1zM1152 732h1V815h-1zM1158 749h1V815h-1zM1164 756h1V815h-1zM1169 760h1V815h-1zM1175 754h1V815h-1zM1181 756h1V815h-1zM1186 763h1V815h-1zM1192 776h1V815h-1zM1197 772h1V815h-1zM1203 738h1V815h-1zM1209 705h1V815h-1zM1214 706h1V815h-1zM1220 704h1V815h-1zM1225 704h1V815h-1zM1231 760h1V815h-1zM1237 798h1V815h-1zM1422 810h1V815h-1zM1428 808h1V815h-1zM1433 799h1V815h-1zM1439 781h1V815h-1zM1445 747h1V815h-1zM1450 751h1V815h-1zM1456 766h1V815h-1zM1461 792h1V815h-1zM1467 808h1V815h-1zM1534 806h1V815h-1zM1540 789h1V815h-1zM1546 782h1V815h-1zM1551 791h1V815h-1zM1557 798h1V815h-1zM1562 811h1V815h-1zM1635 806h1V815h-1zM1641 806h1V815h-1zM1647 805h1V815h-1zM1652 802h1V815h-1zM1658 799h1V815h-1zM1664 804h1V815h-1zM1669 808h1V815h-1zM1675 807h1V815h-1zM1680 802h1V815h-1zM1686 800h1V815h-1zM1692 796h1V815h-1zM1697 802h1V815h-1zM1703 804h1V815h-1zM1708 810h1V815h-1zM1720 810h1V815h-1zM1725 808h1V815h-1zM1731 807h1V815h-1zM1737 806h1V815h-1zM1742 805h1V815h-1zM1748 802h1V815h-1zM1753 797h1V815h-1zM1759 793h1V815h-1zM1765 791h1V815h-1zM1770 785h1V815h-1zM1776 778h1V815h-1zM1781 761h1V815h-1zM1787 753h1V815h-1zM1793 755h1V815h-1zM1798 747h1V815h-1zM1804 731h1V815h-1zM1810 686h1V815h-1zM1815 664h1V815h-1zM1821 651h1V815h-1zM1826 653h1V815h-1zM1832 676h1V815h-1zM1838 711h1V815h-1zM1843 748h1V815h-1zM1849 778h1V815h-1z" fill="#FF3232"/>
<path d="M159 814h1V820h-1zM164 814h1V822h-1zM170 814h1V825h-1zM175 814h1V834h-1zM181 814h1V837h-1zM187 814h1V828h-1zM192 814h1V825h-1zM198 814h1V820h-1zM203 814h1V819h-1zM282 814h1V825h-1zM288 814h1V829h-1zM293 814h1V823h-1zM299 814h1V822h-1zM305 814h1V826h-1zM310 814h1V819h-1zM349 814h1V821h-1zM355 814h1V832h-1zM361 814h1V834h-1zM366 814h1V834h-1zM372 814h1V832h-1zM378 814h1V840h-1zM383 814h1V845h-1zM389 814h1V850h-1zM394 814h1V851h-1zM400 814h1V849h-1zM406 814h1V845h-1zM411 814h1V848h-1zM417 814h1V854h-1zM422 814h1V863h-1zM428 814h1V867h-1zM434 814h1V863h-1zM439 814h1V856h-1zM445 814h1V849h-1zM451 814h1V846h-1zM456 814h1V842h-1zM462 814h1V829h-1zM467 814h1V823h-1zM597 814h1V833h-1zM602 814h1V844h-1zM608 814h1V862h-1zM613 814h1V884h-1zM619 814h1V887h-1zM625 814h1V884h-1zM630 814h1V878h-1zM636 814h1V841h-1zM641 814h1V825h-1zM647 814h1V830h-1zM653 814h1V834h-1zM658 814h1V837h-1zM664 814h1V843h-1zM670 814h1V847h-1zM675 814h1V852h-1zM681 814h1V852h-1zM686 814h1V855h-1zM692 814h1V853h-1zM698 814h1V860h-1zM703 814h1V866h-1zM709 814h1V866h-1zM714 814h1V853h-1zM720 814h1V844h-1zM726 814h1V841h-1zM731 814h1V827h-1zM737 814h1V826h-1zM743 814h1V824h-1zM748 814h1V825h-1zM754 814h1V858h-1zM759 814h1V877h-1zM765 814h1V882h-1zM771 814h1V877h-1zM776 814h1V867h-1zM782 814h1V852h-1zM787 814h1V834h-1zM793 814h1V825h-1zM905 814h1V823h-1zM911 814h1V825h-1zM917 814h1V828h-1zM922 814h1V827h-1zM928 814h1V826h-1zM933 814h1V825h-1zM939 814h1V829h-1zM945 814h1V831h-1zM950 814h1V828h-1zM956 814h1V830h-1zM962 814h1V831h-1zM967 814h1V827h-1zM973 814h1V818h-1zM1023 814h1V817h-1zM1029 814h1V820h-1zM1035 814h1V830h-1zM1040 814h1V832h-1zM1046 814h1V828h-1zM1051 814h1V818h-1zM1102 814h1V817h-1zM1242 814h1V829h-1zM1248 814h1V851h-1zM1254 814h1V872h-1zM1259 814h1V879h-1zM1265 814h1V868h-1zM1270 814h1V866h-1zM1276 814h1V876h-1zM1282 814h1V881h-1zM1287 814h1V869h-1zM1293 814h1V859h-1zM1299 814h1V843h-1zM1304 814h1V833h-1zM1310 814h1V842h-1zM1315 814h1V872h-1zM1321 814h1V884h-1zM1327 814h1V903h-1zM1332 814h1V917h-1zM1338 814h1V928h-1zM1343 814h1V927h-1zM1349 814h1V915h-1zM1355 814h1V910h-1zM1360 814h1V900h-1zM1366 814h1V881h-1zM1372 814h1V864h-1zM1377 814h1V855h-1zM1383 814h1V839h-1zM1388 814h1V827h-1zM1394 814h1V824h-1zM1400 814h1V826h-1zM1405 814h1V824h-1zM1411 814h1V831h-1zM1416 814h1V826h-1zM1473 814h1V822h-1zM1478 814h1V846h-1zM1484 814h1V854h-1zM1489 814h1V855h-1zM1495 814h1V850h-1zM1501 814h1V847h-1zM1506 814h1V837h-1zM1512 814h1V829h-1zM1518 814h1V817h-1zM1568 814h1V851h-1zM1574 814h1V866h-1zM1579 814h1V878h-1zM1585 814h1V880h-1zM1591 814h1V885h-1zM1596 814h1V876h-1zM1602 814h1V860h-1zM1607 814h1V851h-1zM1613 814h1V843h-1zM1619 814h1V839h-1zM1624 814h1V823h-1z" fill="#54FFFF"/>
<rect x="475" y="811" width="9" height="4" fill="#FFFF00"/><rect x="479" y="812" width="1" height="3" fill="#FF3232"/>
<rect x="795" y="811" width="9" height="4" fill="#FFFF00"/><rect x="799" y="812" width="1" height="3" fill="#FF3232"/>
<rect x="974" y="811" width="9" height="4" fill="#FFFF00"/><rect x="978" y="812" width="1" height="3" fill="#FF3232"/>
<rect x="1053" y="811" width="9" height="1" fill="#FFFF00"/><rect x="1053" y="812" width="9" height="3" fill="#FF00FF"/><rect x="1057" y="810" width="1" height="3" fill="#FF3232"/>
<rect x="1418" y="811" width="9" height="4" fill="#FFFF00"/><rect x="1422" y="812" width="1" height="3" fill="#FF3232"/>
<rect x="1519" y="811" width="9" height="2" fill="#FFFF00"/><rect x="1519" y="813" width="9" height="2" fill="#00FF00"/><rect x="1523" y="812" width="1" height="3" fill="#FF3232"/>
<rect x="1530" y="811" width="9" height="1" fill="#FFFF00"/><rect x="1530" y="812" width="9" height="3" fill="#FF00FF"/><rect x="1534" y="810" width="1" height="3" fill="#FF3232"/>
<rect x="1626" y="811" width="9" height="4" fill="#FFFF00"/><rect x="1630" y="812" width="1" height="3" fill="#FF3232"/>
<rect x="1716" y="811" width="9" height="2" fill="#FFFF00"/><rect x="1716" y="813" width="9" height="2" fill="#00FF00"/><rect x="1720" y="812" width="1" height="3" fill="#FF3232"/>
</g>
<path d="M26.2 808.4L31.2 808.4L32.5 807.2L43.8 807.2L48.8 805.6L54.4 805.3L61.9 803.1L65.6 800.6L68.8 799.4L70.6 796.9L75.3 789.0L81.6 780.2L87.9 773.9L95.4 767.0L104.2 762.6L113.0 760.7L121.8 760.1L131.8 756.9L139.3 755.3L150.0 755.1L160.9 756.7L175.1 760.9L183.5 765.1L196.9 768.4L216.9 768.6L233.7 769.7L244.6 769.4L254.6 766.3L267.2 760.5L275.5 760.0L283.9 763.0L296.4 765.9L306.0 767.7L309.3 768.5L318.1 768.2L324.4 766.9L333.2 764.4L343.2 764.4L350.7 765.6L359.5 768.8L368.3 772.6L377.1 775.7L384.6 782.0L394.7 792.0L404.7 797.7L414.8 805.2L422.3 814.0L429.8 822.8L437.4 830.3L440.0 833.0L448.4 839.2L456.7 844.3L465.1 847.2L475.1 847.4L485.2 847.2L493.6 844.7L501.9 841.3L508.6 834.6L512.0 827.5L516.2 820.0L524.5 800.4L533.3 782.9L540.2 765.3L545.8 750.2L553.4 732.6L558.4 718.8L567.2 700.3L576.0 692.2L584.7 687.8L592.3 687.8L601.1 691.6L609.9 701.6L618.6 715.1L629.9 733.3L636.2 737.0L648.8 740.4L663.8 748.3L673.9 756.5L681.4 761.5L691.4 771.6L702.0 783.5L718.0 800.0L730.6 806.3L748.2 810.3L753.2 815.1L759.5 825.1L765.7 834.5L770.8 841.4L777.0 848.3L783.3 851.5L790.9 854.6L799.6 855.2L807.2 853.4L816.0 849.6L824.0 846.4L840.2 838.5L852.8 827.9L865.3 815.3L877.9 807.8L889.2 803.8L901.7 803.4L915.5 807.8L928.1 810.9L940.6 814.7L953.2 819.7L967.0 824.7L980.8 824.7L990.0 821.4L998.4 818.1L1006.7 816.0L1015.1 815.1L1021.8 816.0L1029.3 818.1L1036.9 821.0L1043.6 823.5L1051.9 823.5L1056.9 821.4L1063.6 821.4L1070.3 818.1L1078.7 814.7L1088.7 812.2L1098.8 812.2L1105.5 812.2L1110.5 811.4L1117.2 809.7L1123.9 806.8L1130.6 799.2L1136.4 790.0L1141.5 780.0L1147.0 766.5L1150.0 761.7L1155.0 752.3L1162.6 742.2L1171.3 730.9L1181.4 718.4L1190.2 708.3L1199.0 700.8L1204.0 692.0L1210.3 674.2L1217.8 656.6L1225.3 639.0L1230.3 632.1L1236.6 629.0L1244.2 632.1L1254.2 642.8L1263.0 654.1L1275.5 670.4L1286.8 686.7L1298.1 695.8L1309.4 701.4L1317.0 709.6L1323.2 719.6L1329.5 733.4L1335.8 749.7L1343.3 769.8L1350.9 787.4L1362.2 809.0L1368.1 816.3L1374.4 823.2L1380.6 827.6L1388.2 831.3L1398.2 833.2L1408.3 836.4L1415.8 838.6L1422.1 838.6L1430.9 835.7L1438.4 832.6L1445.9 822.6L1449.2 815.3L1456.7 808.4L1465.5 804.3L1473.0 807.2L1481.8 814.1L1491.9 822.9L1500.7 828.5L1508.2 832.9L1517.0 834.2L1527.0 834.4L1533.3 831.6L1542.1 827.9L1552.1 822.9L1560.9 820.3L1567.2 823.5L1574.7 831.6L1582.3 842.9L1591.0 855.5L1595.3 862.7L1605.4 872.8L1615.4 879.7L1624.2 882.6L1629.2 881.6L1645.5 877.5L1670.6 871.5L1691.2 866.5L1698.3 864.0L1704.5 862.1L1713.3 862.1L1720.9 861.5L1733.4 859.0L1746.0 855.8L1754.0 853.3L1764.0 849.0L1775.7 839.4L1787.0 827.9L1793.9 817.0L1804.0 800.4L1811.5 782.9L1816.5 767.8L1821.5 750.2L1825.3 735.1L1829.1 722.6L1832.8 704.2L1837.9 692.9L1842.9 685.4L1849.2 681.3" stroke="#FFFF00" stroke-width="1.1" fill="none" stroke-linejoin="round"/>
<path d="M26.2 808.1L31.2 807.5L35.0 806.6L40.0 804.7L45.0 802.5L53.8 801.4L58.8 798.4L63.1 796.2L65.6 791.2L68.8 785.0L70.3 776.4L75.3 758.8L80.3 751.9L86.6 747.8L92.9 749.4L97.9 749.4L106.7 753.8L114.2 757.3L121.8 756.1L130.6 751.5L136.8 751.5L143.1 753.2L150.0 754.1L158.4 758.4L169.2 763.4L175.1 770.9L181.8 775.5L195.2 771.3L208.6 769.7L218.6 769.4L233.7 769.4L237.9 772.6L243.7 770.9L244.6 766.7L247.1 762.6L252.9 758.4L261.3 757.1L265.5 751.3L272.2 757.5L277.2 760.9L281.4 766.7L288.1 771.3L293.9 769.4L300.6 770.9L306.0 773.8L311.8 770.0L318.1 766.9L324.4 762.5L330.7 759.4L334.4 759.4L340.7 762.5L347.0 766.3L354.5 775.7L359.5 778.6L367.1 782.3L372.7 783.2L378.4 791.4L384.6 798.9L389.7 805.2L395.9 810.8L401.0 813.7L406.0 814.0L412.3 822.1L417.3 827.8L422.3 837.8L428.6 846.6L434.9 851.6L439.2 853.5L440.0 853.5L446.7 854.7L455.1 858.7L458.4 857.2L465.1 852.6L475.1 848.5L480.2 845.9L486.9 842.2L494.4 838.0L498.6 834.2L501.9 829.2L503.6 822.5L504.9 820.0L509.4 800.4L514.4 782.9L519.5 766.5L524.5 750.2L530.8 736.4L535.8 725.1L540.8 705.4L545.8 688.4L550.9 679.0L557.1 667.1L563.4 660.2L573.4 665.2L578.5 670.8L586.0 678.4L591.0 685.9L596.0 697.8L601.1 706.6L608.6 722.6L612.4 740.2L618.6 752.7L630.6 766.3L636.2 752.7L641.9 744.2L648.8 750.2L656.3 755.2L663.8 762.8L671.4 771.6L675.1 778.5L681.4 782.2L687.7 789.8L692.7 792.9L697.7 800.4L701.7 807.5L709.3 818.6L714.3 816.3L725.6 817.6L726.8 818.6L731.9 813.2L744.4 813.8L748.4 816.3L751.9 827.6L755.7 842.7L759.5 855.2L765.7 867.2L770.8 871.6L775.8 873.4L783.3 869.7L788.3 864.0L795.9 860.3L803.4 852.7L809.7 842.7L816.0 839.9L824.0 835.1L832.7 833.1L845.2 818.5L855.3 799.6L865.3 794.2L871.6 796.5L885.4 796.5L889.2 795.0L896.7 803.4L903.0 808.4L915.5 814.1L928.1 817.2L940.6 823.5L950.7 826.0L959.5 829.8L967.0 831.4L973.3 827.9L984.6 817.2L990.0 814.7L995.0 811.8L1000.9 809.3L1005.9 813.1L1015.1 813.5L1023.5 816.8L1029.3 820.2L1035.2 828.1L1041.0 830.6L1046.9 830.6L1052.8 825.2L1058.6 819.3L1063.6 815.1L1068.7 809.7L1073.7 807.2L1081.2 807.2L1085.4 806.1L1089.6 807.2L1093.8 810.1L1098.8 813.1L1102.1 813.9L1107.2 811.0L1113.0 809.3L1116.4 804.3L1120.5 796.7L1123.9 794.2L1126.4 785.0L1128.1 780.0L1130.7 762.8L1137.0 746.4L1142.0 733.9L1147.0 722.0L1153.3 715.3L1153.8 715.2L1158.8 714.8L1163.8 711.5L1170.1 705.8L1174.5 696.4L1179.5 692.0L1186.4 686.5L1192.7 688.0L1197.1 681.7L1200.2 670.4L1204.0 650.3L1207.7 630.2L1209.6 623.3L1215.3 608.3L1221.6 592.6L1226.6 582.5L1230.3 596.3L1235.4 613.9L1239.1 625.2L1242.9 640.3L1247.9 651.6L1252.9 666.6L1259.2 683.0L1265.5 684.8L1271.1 692.0L1276.8 703.3L1281.8 714.3L1291.9 715.2L1298.1 711.5L1304.4 708.3L1310.7 716.5L1313.2 729.7L1317.0 741.0L1322.0 753.5L1325.7 767.3L1330.8 786.2L1335.8 803.7L1337.3 810.0L1343.0 825.1L1350.5 836.4L1360.6 849.5L1368.1 847.7L1378.1 846.4L1388.2 837.4L1395.7 837.6L1405.7 840.8L1412.0 846.7L1417.0 845.8L1422.1 837.0L1428.3 834.5L1433.4 827.6L1435.4 821.6L1441.7 802.8L1445.4 789.0L1451.7 783.3L1456.7 785.8L1461.7 794.0L1469.3 802.8L1474.3 815.3L1479.3 826.6L1484.3 836.7L1491.9 842.9L1501.9 846.1L1512.0 841.7L1519.5 835.4L1524.5 833.5L1529.5 836.7L1535.8 826.6L1540.8 816.6L1546.5 809.3L1552.1 811.6L1557.2 812.8L1562.2 819.1L1565.9 827.9L1569.7 840.4L1574.0 856.4L1580.3 872.8L1587.8 885.3L1596.6 895.6L1601.6 892.6L1617.9 892.9L1620.4 892.9L1626.7 884.1L1633.0 877.2L1645.5 874.0L1658.1 867.5L1670.6 869.0L1683.2 862.1L1693.2 856.4L1703.3 857.5L1713.3 861.5L1720.9 859.0L1733.4 855.8L1746.0 850.2L1754.0 845.1L1764.0 839.4L1771.8 829.8L1778.2 817.0L1781.4 806.7L1786.4 796.7L1792.7 788.5L1798.9 775.3L1804.0 759.0L1805.8 750.2L1810.2 722.6L1815.9 686.6L1821.5 661.5L1825.9 643.3L1832.5 636.4L1838.5 640.2L1843.5 650.2L1849.2 660.3" stroke="#FFFFFF" stroke-width="1.1" fill="none" stroke-linejoin="round"/>
<path d="M0 808.5L12 808L13.5 807L26 807" stroke="#00FF00" stroke-width="3.2" fill="none"/>
<path d="M163.4 757.5L238.7 769.7" stroke="#00FF00" stroke-width="4.2" fill="none"/>
<path d="M1426.6 837L1524.5 833" stroke="#FF0000" stroke-width="4" fill="none"/>
<path d="M1633.6 880.3L1720.9 861.5" stroke="#FF0000" stroke-width="4" fill="none"/>
<path d="M8.8 809l5 6h-4v6h-2v-6h-4z" fill="#FF0000"/>
<path d="M35.6 808l5 6h-4v6h-2v-6h-4z" fill="#FF0000"/>
<path d="M221.1 770l5 6h-4v6h-2v-6h-4z" fill="#FF0000"/>
<path d="M249 763l5 6h-4v6h-2v-6h-4z" fill="#FF0000"/>
<path d="M321.9 766.3l5 6h-4v6h-2v-6h-4z" fill="#FF0000"/>
<path d="M480 848l5 6h-4v6h-2v-6h-4z" fill="#FF0000"/>
<path d="M799.9 855.9l5 6h-4v6h-2v-6h-4z" fill="#FF0000"/>
<path d="M978.7 824.7l5 6h-4v6h-2v-6h-4z" fill="#FF0000"/>
<path d="M1058 822l5 6h-4v6h-2v-6h-4z" fill="#FF0000"/>
<path d="M1059 824l5 6h-4v6h-2v-6h-4z" fill="#FF0000"/>
<path d="M1108.8 812l5 6h-4v6h-2v-6h-4z" fill="#FF0000"/>
<path d="M1423 838l5 6h-4v6h-2v-6h-4z" fill="#FF0000"/>
<path d="M1523.9 833.5l5 6h-4v6h-2v-6h-4z" fill="#FF0000"/>
<path d="M1535.2 831.4l5 6h-4v6h-2v-6h-4z" fill="#FF0000"/>
<path d="M1631.1 881l5 6h-4v6h-2v-6h-4z" fill="#FF0000"/>
<path d="M1720.9 860.2l5 6h-4v6h-2v-6h-4z" fill="#FF0000"/>
<path d="M24 810h2v6h4l-5 6l-5 -6h4z" fill="#00CC00"/>
<path d="M159 761.7h2v6h4l-5 6l-5 -6h4z" fill="#00CC00"/>
<path d="M236.9 774h2v6h4l-5 6l-5 -6h4z" fill="#00CC00"/>
<path d="M282.1 769h2v6h4l-5 6l-5 -6h4z" fill="#00CC00"/>
<path d="M344.1 765.6h2v6h4l-5 6l-5 -6h4z" fill="#00CC00"/>
<path d="M590.7 688.8h2v6h4l-5 6l-5 -6h4z" fill="#00CC00"/>
<path d="M899.7 808h2v6h4l-5 6l-5 -6h4z" fill="#00CC00"/>
<path d="M1022.9 819.3h2v6h4l-5 6l-5 -6h4z" fill="#00CC00"/>
<path d="M1096 814h2v6h4l-5 6l-5 -6h4z" fill="#00CC00"/>
<path d="M1241.9 640.3h2v6h4l-5 6l-5 -6h4z" fill="#00CC00"/>
<path d="M1473 814h2v6h4l-5 6l-5 -6h4z" fill="#00CC00"/>
<path d="M1529.2 837.9h2v6h4l-5 6l-5 -6h4z" fill="#00CC00"/>
<path d="M1568 841h2v6h4l-5 6l-5 -6h4z" fill="#00CC00"/>
<path d="M1714 865h2v6h4l-5 6l-5 -6h4z" fill="#00CC00"/>
<text x="16" y="824" fill="#FF00FF" >0.104</text>
<text x="158" y="763" fill="#FF00FF" >12.286</text>
<text x="235" y="823" fill="#FF00FF" >0.163</text>
<text x="279.8" y="806" fill="#FF00FF" >2.064</text>
<text x="342" y="815" fill="#FF00FF" >0.987</text>
<text x="588.5" y="703" fill="#FF00FF" >37.634</text>
<text x="897.7" y="778" fill="#FF00FF" >12.321</text>
<text x="1021" y="809" fill="#FF00FF" >2.153</text>
<text x="1094" y="805.5" fill="#FF00FF" >2.658</text>
<text x="1240" y="715" fill="#FF00FF" >43.072</text>
<text x="1471" y="758" fill="#FF00FF" >7.957</text>
<text x="1566" y="793" fill="#FF00FF" >3.254</text>
<text x="1527" y="822" fill="#FF00FF" >0.099</text>
<text x="1712" y="807" fill="#FF00FF" >4.702</text>
<text x="-1.5" y="826" fill="#00FF00" >0.008</text>
<text x="32.8" y="828" fill="#00FF00" >0.078</text>
<text x="217.5" y="849" fill="#00FF00" >3.128</text>
<text x="246" y="832" fill="#00FF00" >0.316</text>
<text x="319" y="841" fill="#00FF00" >1.775</text>
<text x="476.8" y="879" fill="#00FF00" >19.606</text>
<text x="796.5" y="899" fill="#00FF00" >39.471</text>
<text x="975.5" y="843" fill="#00FF00" >5.126</text>
<text x="1054.9" y="844" fill="#00FF00" >1.845</text>
<text x="1105.9" y="829" fill="#00FF00" >0.099</text>
<text x="1520.6" y="867" fill="#00FF00" >6.937</text>
<text x="1531.4" y="829" fill="#00FF00" >0.161</text>
<text x="1628" y="897" fill="#00FF00" >14.447</text>
<text x="1717.7" y="827" fill="#00FF00" >0.031</text>
<text x="1847.3" y="662" fill="#00FF00" clip-path="url(#cpr)">42.71</text>
<text x="3" y="16" fill="#C8C8C8" >300378</text><text x="46.5" y="16" fill="#C8C8C8" textLength="81" lengthAdjust="spacingAndGlyphs">鼎捷数智(日线)</text>
<g transform="translate(138.9 12)"><circle r="6" fill="#7A7A7A"/><path d="M-3.2 -1.2L0 2L3.2 -1.2" stroke="#1A1A1A" stroke-width="1.6" fill="none"/></g>
<text x="149" y="16" fill="#DCDCDC" >起爆抓板操盘</text>
<text x="227.3" y="16" fill="#FF0000" >: 56.01</text>
<text x="268.5" y="16" fill="#FF8080" textLength="60" lengthAdjust="spacingAndGlyphs">支撑: 56.25</text>
<text x="333.5" y="16" fill="#00FF00" textLength="60.5" lengthAdjust="spacingAndGlyphs">阻力: 64.72</text>
<text x="400" y="16" fill="#FFFF00" textLength="60" lengthAdjust="spacingAndGlyphs">顶点: 71.78</text>
<text x="466" y="16" fill="#FF00FF" textLength="59" lengthAdjust="spacingAndGlyphs">低点: 40.11</text>
<g transform="translate(6.7 571)"><circle r="6" fill="#7A7A7A"/><path d="M-3.2 -1.2L0 2L3.2 -1.2" stroke="#1A1A1A" stroke-width="1.6" fill="none"/></g>
<text x="17.3" y="575" fill="#C8C8C8" textLength="81" lengthAdjust="spacingAndGlyphs">精选MACD背驰</text>
<text x="104.3" y="575" fill="#FFFFFF" textLength="55" lengthAdjust="spacingAndGlyphs">DIFF: 4.46</text>
<text x="165.7" y="575" fill="#FFFF00" textLength="52.6" lengthAdjust="spacingAndGlyphs">DEA: 3.93</text>
<text x="224.3" y="575" fill="#FF00FF" textLength="62.4" lengthAdjust="spacingAndGlyphs">MACD: 1.07</text>
<text x="292.7" y="575" fill="#FF0000" textLength="33.3" lengthAdjust="spacingAndGlyphs">底背: -</text>
<text x="331.7" y="575" fill="#00FF00" textLength="33.3" lengthAdjust="spacingAndGlyphs">顶背: -</text>
<text x="371" y="575" fill="#FF0000" textLength="74.7" lengthAdjust="spacingAndGlyphs">MACD值: 1.07</text>
<text x="452.3" y="575" fill="#C8C8C8" textLength="58.4" lengthAdjust="spacingAndGlyphs">面积: 42.71</text>
<text x="0.5" y="931.5" fill="#808080" >用到未来数据</text>
<rect x="1715" y="516" width="156" height="47" fill="url(#lg)"/>
<text x="1723.5" y="538" fill="#FFFF00" style="font-weight:bold;font-size:15.5px" textLength="47" lengthAdjust="spacingAndGlyphs">股道边</text>
<text x="1773" y="536.5" fill="#FFB400" style="font-weight:bold;font-size:11.4px" textLength="91.5" lengthAdjust="spacingAndGlyphs">指标公式量化资源</text>
<text x="1723.3" y="554.3" fill="#FFFFFF" style="font-weight:bold;font-size:18.4px" textLength="142.7" lengthAdjust="spacingAndGlyphs">www.de6688.com</text></svg></body></html>
